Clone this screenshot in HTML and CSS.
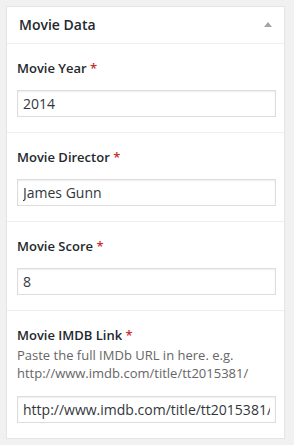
FILE: index.html
```html
<!DOCTYPE html>
<html lang="en">
<head>
<meta charset="utf-8">
<title>Movie Data</title>
<link rel="stylesheet" href="styles.css">
</head>
<body>
<div class="postbox">
  <div class="postbox-header">
    <h2 class="postbox-title">Movie Data</h2>
    <span class="toggle-arrow" aria-hidden="true"></span>
  </div>
  <div class="field">
    <label class="field-label" for="year">Movie Year <span class="req">*</span></label>
    <input class="field-input" id="year" type="text" value="2014">
  </div>
  <div class="field">
    <label class="field-label" for="director">Movie Director <span class="req">*</span></label>
    <input class="field-input" id="director" type="text" value="James Gunn">
  </div>
  <div class="field">
    <label class="field-label" for="score">Movie Score <span class="req">*</span></label>
    <input class="field-input" id="score" type="text" value="8">
  </div>
  <div class="field">
    <label class="field-label" for="imdb">Movie IMDB Link <span class="req">*</span></label>
    <p class="field-desc">Paste the full IMDb URL in here. e.g.<br>http://www.imdb.com/title/tt2015381/</p>
    <input class="field-input field-input-desc" id="imdb" type="text" value="http://www.imdb.com/title/tt2015381/">
  </div>
</div>
</body>
</html>
```

FILE: styles.css
```css
html, body {
  margin: 0;
  padding: 0;
  background: #f1f1f1;
}
body {
  padding: 6px 9px 0 6px;
  font-family: "Open Sans", "Noto Sans", sans-serif;
  color: #23282d;
}
.postbox {
  background: #fff;
  border: 1px solid #e5e5e5;
  box-shadow: 0 1px 1px rgba(0, 0, 0, 0.04);
}
.postbox-header {
  display: flex;
  align-items: center;
  justify-content: space-between;
  padding: 8px 12px;
  border-bottom: 1px solid #eee;
}
.postbox-title {
  margin: 0;
  font-size: 14px;
  font-weight: 600;
  line-height: 19.6px;
  color: #23282d;
}
.toggle-arrow {
  width: 0;
  height: 0;
  border-left: 4px solid transparent;
  border-right: 4px solid transparent;
  border-bottom: 5px solid #a0a5aa;
  margin-right: 0;
  margin-top: -1px;
}
.field {
  display: flex;
  flex-direction: column;
  padding: 15px 8px 15px 10px;
}
.field + .field {
  border-top: 1px solid #eee;
}
.field-label {
  font-size: 13px;
  font-weight: 600;
  line-height: 18px;
  color: #23282d;
  margin-bottom: 13px;
}
.req {
  color: #c9302c;
}
.field-desc {
  margin: -11px 0 14px;
  font-size: 13px;
  line-height: 18px;
  color: #666;
}
.field-input {
  box-sizing: border-box;
  width: 100%;
  height: 27px;
  margin: 0;
  padding: 0 5px;
  border: 1px solid #ddd;
  box-shadow: inset 0 1px 2px rgba(0, 0, 0, 0.07);
  background: #fff;
  font-family: "Open Sans", "Noto Sans", sans-serif;
  font-size: 14px;
  color: #32373c;
  outline: none;
  border-radius: 0;
}
```
